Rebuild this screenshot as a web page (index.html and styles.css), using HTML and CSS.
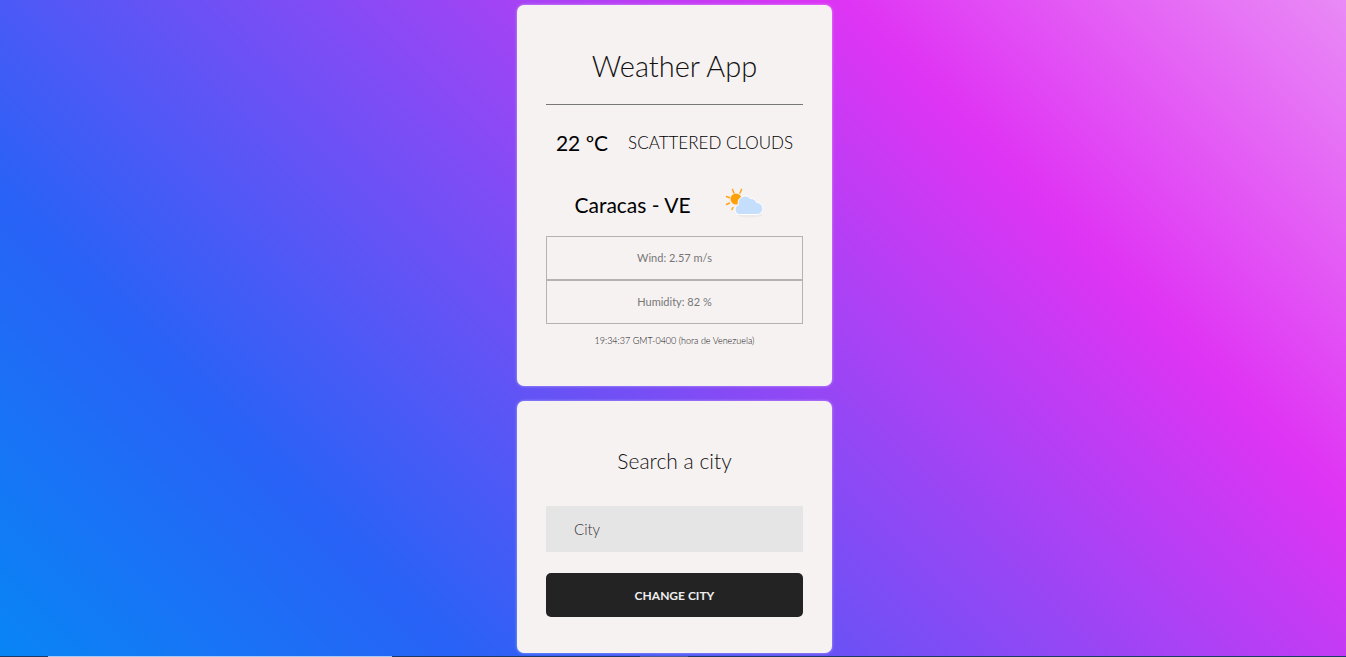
FILE: index.html
```html
<!DOCTYPE html>
<html lang="en">
<head>
<meta charset="utf-8">
<meta name="viewport" content="width=device-width, initial-scale=1">
<title>Weather App</title>
<link rel="stylesheet" href="styles.css">
</head>
<body>
<main class="page">
  <section class="card">
    <h1 class="title">Weather App</h1>
    <div class="row">
      <span class="reading">22 ºC</span>
      <span class="condition">SCATTERED CLOUDS</span>
    </div>
    <div class="row place">
      <h2 class="reading">Caracas - VE</h2>
      <svg class="icon" viewBox="0 0 56 44" role="img" aria-label="Scattered clouds">
        <ellipse class="shade" cx="31" cy="32" rx="12" ry="2.500"/>
        <path class="rays" d="M13.500 6.500l1.500 3.500M22.500 6.500l-1.500 3.500M7.500 13.500l3 1.200M7.500 21.500l3-1.500M13 26.500l1-2"/>
        <circle class="sun" cx="17" cy="16" r="5.500"/>
        <path class="cloud" d="M21.500 31.500a5 5 0 0 1-2-9.700A6.800 6.800 0 0 1 31.200 15.500a6.800 6.800 0 0 1 6.500 4A6 6 0 0 1 38 31.500z"/>
      </svg>
    </div>
    <ul class="facts">
      <li class="fact">Wind: 2.57 m/s</li>
      <li class="fact">Humidity: 82 %</li>
    </ul>
    <p class="time">19:34:37 GMT-0400 (hora de Venezuela)</p>
  </section>
  <form class="card search">
    <h2 class="subtitle"><label for="city">Search a city</label></h2>
    <input class="field" id="city" type="text" placeholder="City">
    <button class="submit" type="button">CHANGE CITY</button>
  </form>
</main>
<footer class="edge"><span class="edge-light"></span><span class="edge-dim"></span></footer>
</body>
</html>
```
FILE: styles.css
```css
* { box-sizing: border-box; }

body {
  margin: 0;
  min-height: 100vh;
  display: flex;
  flex-direction: column;
  font-family: Lato, sans-serif;
  font-weight: 300;
  color: #000;
  background: linear-gradient(45deg, #0885f5 0%, #2862f6 23%, #df34f4 75%, #e98af6 100%);
}

h1, h2, p, ul { margin: 0; padding: 0; font-weight: inherit; }

.page {
  flex: 1;
  display: flex;
  flex-direction: column;
  align-items: center;
  gap: 15px;
  padding: 5px 0 3px 3px;
}

.card {
  width: 315px;
  max-width: 100%;
  padding: 40px 29px 38px;
  display: flex;
  flex-direction: column;
  text-align: center;
  background: #f6f2f2;
  border-radius: 7px;
  box-shadow: 0 0 3px rgba(255, 255, 255, 0.5);
}

.title {
  padding-bottom: 17px;
  border-bottom: 1px solid #777;
  font-size: 29px;
  line-height: 42px;
  color: #111;
}

.row {
  display: flex;
  align-items: center;
  justify-content: center;
  gap: 20px;
  padding-top: 23px;
  line-height: 30px;
}

.place { gap: 28px; padding: 32px 0 16px; }
.reading { font-size: 21px; font-weight: 400; }
.condition { font-size: 17px; color: #000; }
.icon { width: 56px; height: 44px; margin: -7px 0; }
.shade { fill: #ece9ea; }
.rays { fill: none; stroke: #ffa318; stroke-width: 1.5; stroke-linecap: round; }
.sun { fill: #fda10b; }
.cloud { fill: #c4defc; stroke: #fff; stroke-width: 1; }

.facts { list-style: none; }
.fact {
  border: 1px solid #b5b2b2;
  font-size: 11px;
  font-weight: 400;
  line-height: 42px;
  color: #777;
}

.time { padding-top: 10px; font-size: 9px; line-height: 14px; color: #111; }

.subtitle { font-size: 21px; line-height: 40px; color: #111; }

.field {
  width: 100%;
  height: 46px;
  margin-top: 25px;
  padding: 0 28px;
  border: 0;
  background: #e6e5e6;
  font: inherit;
  font-size: 15px;
}
.field::placeholder { color: #333; opacity: 1; }

.submit {
  height: 44px;
  margin-top: 21px;
  border: 0;
  border-radius: 5px;
  background: #232323;
  color: #eee;
  font: inherit;
  font-size: 12px;
  font-weight: 700;
}

.search { padding-bottom: 36px; }

.edge {
  height: 1px;
  display: flex;
  gap: 248px;
  padding-left: 48px;
  background: #1b3a68;
}
.edge-light { width: 344px; background: #a8c8f4; }
.edge-dim { width: 48px; background: #4a5d92; }
```
